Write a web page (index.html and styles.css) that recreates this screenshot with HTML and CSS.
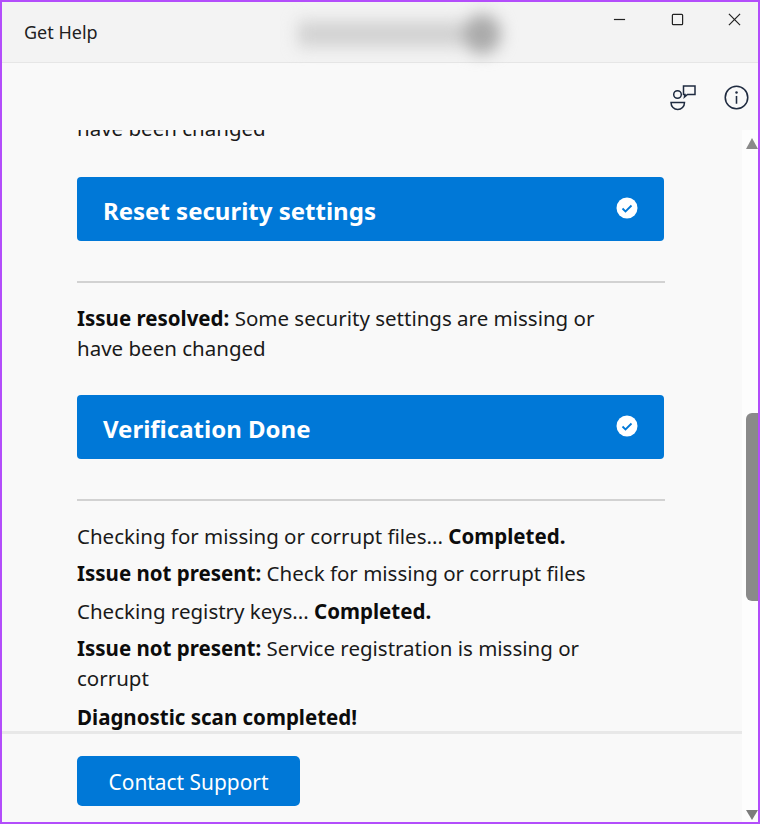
FILE: index.html
```html
<!DOCTYPE html>
<html lang="en">
<head>
<meta charset="utf-8">
<title>Get Help</title>
<link rel="stylesheet" href="styles.css">
</head>
<body>
<div class="window">
  <header class="titlebar">
    <span class="app-title">Get Help</span>
    <div class="account-blur"><span class="blur-name"></span><span class="blur-pic"></span></div>
    <div class="win-controls">
      <svg class="win-icon" viewBox="0 0 14 14"><path d="M1 7h12" /></svg>
      <svg class="win-icon" viewBox="0 0 14 14"><rect x="1.500" y="1.500" width="11" height="11" rx="1" /></svg>
      <svg class="win-icon" viewBox="0 0 14 14"><path d="M1 1l12 12M13 1L1 13" /></svg>
    </div>
  </header>
  <div class="toolbar">
    <svg class="tool-icon" viewBox="0 0 26 26"><circle cx="7.500" cy="9.500" r="3.800" /><path d="M1 17.500h13.500c0 4-3 7-6.750 7s-6.750-3-6.750-7z" /><path d="M13.500 1h11.500v8.500h-7.500l-3 2.500.5-2.500h-1.500z" /></svg>
    <svg class="tool-icon info" viewBox="0 0 24 24"><circle cx="12" cy="12" r="10.800" /><circle class="dot" cx="12" cy="7.300" r="1.200" /><path d="M12 10.500v7.500" /></svg>
  </div>
  <div class="body">
    <div class="main">
      <div class="scroll">
        <p class="msg first"><b>Issue resolved:</b> Some security settings are missing or have been changed</p>
        <div class="action"><span>Reset security settings</span><svg class="check" viewBox="0 0 22 22"><circle cx="11" cy="11" r="10.500" /><path d="M6.500 11.500l3 3 6-6" /></svg></div>
        <hr class="rule">
        <p class="msg"><b>Issue resolved:</b> Some security settings are missing or have been changed</p>
        <div class="action"><span>Verification Done</span><svg class="check" viewBox="0 0 22 22"><circle cx="11" cy="11" r="10.500" /><path d="M6.500 11.500l3 3 6-6" /></svg></div>
        <hr class="rule lead">
        <p class="line">Checking for missing or corrupt files... <b>Completed.</b></p>
        <p class="line"><b>Issue not present:</b> Check for missing or corrupt files</p>
        <p class="line">Checking registry keys... <b>Completed.</b></p>
        <p class="line narrow"><b>Issue not present:</b> Service registration is missing or corrupt</p>
        <p class="line last"><b>Diagnostic scan completed!</b></p>
      </div>
      <div class="footer">
        <button class="contact">Contact Support</button>
      </div>
    </div>
    <aside class="rail">
      <span class="arrow up"></span>
      <span class="thumb"></span>
      <span class="arrow down"></span>
    </aside>
  </div>
</div>
</body>
</html>
```
FILE: styles.css
```css
* { box-sizing: border-box; }
html, body { margin: 0; height: 100%; }
body { font-family: "Noto Sans", "Open Sans", sans-serif; color: #1c1c1c; }
.window {
  width: 760px; height: 824px;
  border: 2px solid #b34dfb;
  background: #f9f9f9;
  display: flex; flex-direction: column;
  overflow: hidden;
}
.titlebar {
  height: 61px; flex: none;
  background: #f3f3f3;
  border-bottom: 1px solid #e6e6e6;
  display: flex; align-items: flex-start;
}
.app-title { font-size: 18px; line-height: 24px; margin: 18px 0 0 22px; width: 104px; color: #202020; }
.account-blur { width: 225px; height: 46px; margin: 9px 0 0 170px; display: flex; align-items: center; filter: blur(8px); }
.blur-name { width: 165px; height: 26px; background: #d2d2d2; }
.blur-pic { width: 38px; height: 40px; border-radius: 50%; background: #aaaaaa; }
.win-controls { margin-left: auto; display: flex; gap: 44.500px; padding: 11px 17px 0 0; }
.win-icon { width: 13px; height: 13px; fill: none; stroke: #222; stroke-width: 1.300; }
.toolbar { height: 67px; flex: none; display: flex; justify-content: flex-end; align-items: flex-start; gap: 28px; padding: 22px 9px 0 0; }
.tool-icon { width: 26px; height: 26px; fill: none; stroke: #1f2b40; stroke-width: 1.500; }
.tool-icon.info { width: 25px; height: 25px; }
.info .dot { fill: #1f2b40; stroke: none; }
.body { flex: 1; display: flex; min-height: 0; }
.main { flex: 1; min-width: 0; display: flex; flex-direction: column; }
.scroll { flex: 1; min-height: 0; overflow: hidden; display: flex; flex-direction: column; justify-content: flex-end; padding: 0 77px 0 75px; }
.scroll > * { flex: none; }
.msg, .line { margin: 0; font-size: 20.500px; line-height: 30px; color: #1a1a1a; }
.msg { margin-bottom: 32px; max-width: 530px; }
.msg.first { margin-bottom: 34px; }
.line { margin-bottom: 7.500px; }
.line.narrow { max-width: 530px; margin-bottom: 9px; }
.line.last { margin-bottom: -1px; }
b { font-weight: 700; color: #0c0c0c; }
.action {
  height: 64px; margin-right: 1px; background: #0078d7; border-radius: 4px; color: #fff;
  display: flex; align-items: center; justify-content: space-between;
  padding: 0 26px; font-size: 24px; font-weight: 700;
}
.action span { position: relative; top: 1px; }
.check { width: 22px; height: 22px; margin: -2px 0 0 0; }
.check circle { fill: #fff; }
.check path { fill: none; stroke: #0078d7; stroke-width: 1.800; }
.rule { height: 2px; border: 0; background: #d2d2d2; margin: 40px 0 20px; }
.rule.lead { margin-bottom: 19.500px; }
.footer { flex: none; height: 91px; border-top: 3px solid #e8e8e8; padding: 22px 0 0 75px; }
.contact {
  width: 223px; height: 50px; padding: 2px 0 0; background: #0078d7; color: #fff; border: 0; border-radius: 5px;
  font-family: inherit; font-size: 20.900px;
}
.rail { flex: none; width: 16px; background: #fdfdfd; display: flex; flex-direction: column; align-items: flex-end; padding-top: 8px; }
.arrow { width: 0; height: 0; border-left: 6px solid transparent; border-right: 6px solid transparent; }
.arrow.up { border-bottom: 11px solid #8a8a8a; }
.arrow.down { border-top: 10px solid #7c7c7c; margin-top: auto; margin-bottom: 2px; }
.thumb { width: 12px; height: 188px; background: #8a8a8a; border-radius: 6px 0 0 6px; margin-top: 264px; }
```
